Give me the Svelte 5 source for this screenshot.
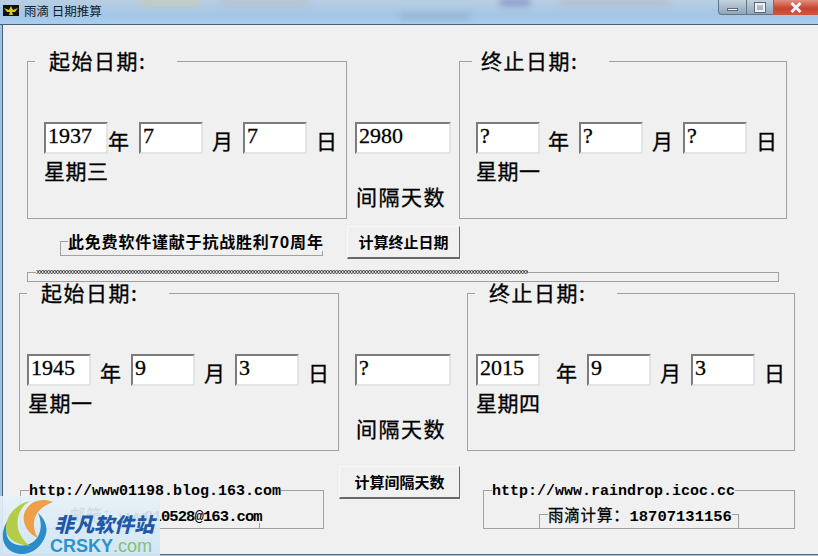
<script>
  // 两组日期框:起始 / 终止
  const blocks = [
    {
      from: { cls: 'g1', title: '起始日期:', y: '1937', m: '7', d: '7', week: '星期三' },
      days: '2980',
      to: { cls: 'g2', title: '终止日期:', y: '?', m: '?', d: '?', week: '星期一' }
    },
    {
      from: { cls: 'g3', title: '起始日期:', y: '1945', m: '9', d: '3', week: '星期一' },
      days: '?',
      to: { cls: 'g4', title: '终止日期:', y: '2015', m: '9', d: '3', week: '星期四' }
    }
  ];
  const crosses = 'x'.repeat(164);
</script>

{#snippet dateGroup(g)}
  <fieldset class="group {g.cls}">
    <legend>{g.title}</legend>
    <div class="dates">
      <input class="field" value={g.y} />
      <span class="unit u1">年</span>
      <input class="field" value={g.m} />
      <span class="unit u2">月</span>
      <input class="field" value={g.d} />
      <span class="unit u3">日</span>
    </div>
    <div class="week">{g.week}</div>
  </fieldset>
{/snippet}

{#snippet block(b)}
  <div class="block {b.from.cls}-row">
    {@render dateGroup(b.from)}
    <div class="middle">
      <input class="field wide" value={b.days} />
      <div class="days-label">间隔天数</div>
    </div>
    {@render dateGroup(b.to)}
  </div>
{/snippet}

<div class="window">
  <header class="titlebar">
    <div class="glass">
      <i class="blob b1"></i><i class="blob b2"></i><i class="blob b3"></i><i class="blob b4"></i><i class="blob b5"></i>
    </div>
    <svg class="app-icon" width="16" height="11" viewBox="0 0 16 11">
      <rect width="16" height="11" fill="#111" />
      <path d="M1 3 L6 5 L8 1 L10 5 L15 3 L12 7 L9 7 L10 10 L6 10 L7 7 L4 7 Z" fill="#d8c820" />
    </svg>
    <span class="title">雨滴 日期推算</span>
    <div class="controls">
      <button class="ctl min" aria-label="最小化"><i></i></button>
      <button class="ctl max" aria-label="最大化"><i></i></button>
      <button class="ctl close" aria-label="关闭">
        <svg width="14" height="11" viewBox="0 0 14 11"><path d="M2.5 1 L11.5 10 M11.5 1 L2.5 10" stroke="#f4f4f4" stroke-width="3" /></svg>
      </button>
    </div>
  </header>

  <main class="form">
    {@render block(blocks[0])}

    <div class="action-row">
      <fieldset class="note"><legend>此免费软件谨献于抗战胜利70周年</legend></fieldset>
      <button class="calc end-btn">计算终止日期</button>
    </div>

    <fieldset class="divider"><legend>{crosses}</legend></fieldset>

    {@render block(blocks[1])}

    <div class="footer">
      <fieldset class="link left">
        <legend>http://www01198.blog.163.com</legend>
        <fieldset class="inner mail"><legend><span class="cjk">邮箱：</span>www010528@163.com</legend></fieldset>
      </fieldset>
      <button class="calc gap-btn">计算间隔天数</button>
      <fieldset class="link right">
        <legend>http://www.raindrop.icoc.cc</legend>
        <fieldset class="inner phone"><legend><span class="cjk">雨滴计算：</span>18707131156</legend></fieldset>
      </fieldset>
    </div>
  </main>

  <!-- 水印 -->
  <div class="watermark">
    <svg class="wm-logo" width="58" height="60" viewBox="0 0 58 60">
      <path d="M14 17 C2 28 -1 44 8 53 C20 63 40 58 46 38 C48 30 44 22 38 17 C43 28 41 40 33 46 C24 52 10 50 7 40 C5 32 8 24 14 17 Z" fill="#2b8cc8" />
      <path d="M30 5 C16 8 5 20 6 34 C7 42 14 48 30 50 C20 42 16 32 18 22 C19 15 24 8 30 5 Z" fill="#b4cc48" />
      <path d="M53 6 C40 1 28 6 24 18 C22 28 28 38 38 42 C33 34 32 24 38 16 C42 11 47 8 53 6 Z" fill="#ee9f48" />
    </svg>
    <div class="wm-cn">非凡软件站</div>
    <div class="wm-en"><b>CRSKY</b><span>.com</span></div>
  </div>
</div>

<style>
  :global(body) {
    margin: 0;
    background: #9fc3e3;
  }

  .window {
    position: relative;
    width: 818px;
    height: 556px;
    overflow: hidden;
    font-family: "Noto Sans CJK SC", "Liberation Mono", monospace;
    color: #000;
  }

  /* 标题栏 */
  .titlebar {
    position: relative;
    height: 25px;
    box-sizing: border-box;
    display: flex;
    align-items: center;
    padding: 0 0 3px 3px;
    border-bottom: 1px solid #4a6076;
    background: linear-gradient(#b8cfe2, #a4c6e6 60%, #a9cdec);
  }

  .glass {
    position: absolute;
    inset: 0;
    overflow: hidden;
    filter: blur(3px);
  }

  .blob {
    position: absolute;
    top: -3px;
    height: 8px;
    background: #c9c9b0;
  }

  .b1 { left: 140px; width: 60px; }
  .b2 { left: 220px; width: 90px; background: #b5c0c8; }
  .b3 { left: 500px; width: 30px; background: #8088c0; }
  .b4 { left: 560px; width: 110px; background: #b4bcc4; }
  .b5 { left: 400px; width: 70px; top: 14px; height: 5px; background: #8fb0cc; }

  .app-icon {
    position: relative;
    flex: none;
  }

  .title {
    position: relative;
    margin-left: 5px;
    font-size: 12.5px;
    line-height: 16px;
    color: #10202c;
  }

  .controls {
    position: absolute;
    top: 0;
    left: 718px;
    display: flex;
    height: 15px;
  }

  .ctl {
    display: flex;
    align-items: center;
    justify-content: center;
    box-sizing: border-box;
    height: 15px;
    padding: 0;
    border: 1px solid #5e7488;
    border-top: 0;
    background: linear-gradient(#c4d2de, #8fa6ba);
  }

  .min {
    width: 29px;
    border-radius: 0 0 0 4px;
  }

  .min i {
    display: block;
    width: 11px;
    height: 3px;
    margin-top: 5px;
    background: #f2f4f6;
    border: 1px solid #5c6a78;
    box-sizing: border-box;
  }

  .max {
    width: 27px;
    border-left: 0;
  }

  .max i {
    display: block;
    width: 10px;
    height: 9px;
    box-sizing: border-box;
    border: 2px solid #eef2f5;
    outline: 1px solid #5c6a78;
  }

  .close {
    width: 44px;
    border: 0;
    background: linear-gradient(#e09080, #c8452e 55%, #c85a40);
  }

  /* 窗体 */
  .form {
    box-sizing: border-box;
    height: 530px;
    margin-left: 2px;
    padding-top: 21px;
    border-left: 1px solid #4a6076;
    border-bottom: 1px solid #56697c;
    background: #f0f0f0;
  }

  fieldset {
    box-sizing: border-box;
    min-width: 0;
    margin: 0;
    padding: 0;
    border: 1px solid #a0a0a0;
  }

  legend {
    padding: 0;
    white-space: nowrap;
  }

  .block {
    display: flex;
    align-items: flex-start;
    height: 173px;
  }

  .group {
    height: 173px;
  }

  .group legend,
  .unit,
  .week,
  .days-label {
    -webkit-text-stroke: 0.3px #000;
  }

  .group legend {
    box-sizing: border-box;
    height: 30px;
    font-size: 21px;
    line-height: 28px;
    letter-spacing: 1.5px;
    margin-left: 7px;
    padding-left: 14px;
  }

  .g1 { width: 320px; margin-left: 24px; }
  .g2 { width: 328px; margin-left: 8px; }
  .g3 { width: 320px; margin-left: 16px; }
  .g4 { width: 328px; margin-left: 16px; }

  .g1 legend { width: 142px; }
  .g2 legend { width: 137px; margin-left: 12px; padding-left: 9px; }
  .g3 legend { width: 142px; }
  .g4 legend { width: 142px; }

  .dates {
    display: flex;
    margin-top: 46px;
    padding-left: 16px;
  }

  .g3 .dates { padding-left: 7px; }
  .g4 .dates { padding-left: 8px; }

  .field {
    box-sizing: border-box;
    flex: none;
    width: 64px;
    height: 32px;
    padding: 0 0 5px 2px;
    border: 2px solid;
    border-color: #7c7c7c #e4e4e4 #e4e4e4 #7c7c7c;
    border-radius: 0;
    outline: 0;
    background: #fff;
    font-family: "Liberation Serif", serif;
    font-size: 22px;
    -webkit-text-stroke: 0.3px #000;
    color: #000;
  }

  .unit {
    flex: none;
    box-sizing: border-box;
    font-size: 21px;
    line-height: 36px;
  }

  /* 年/月/日 的位置每组都不一样 */
  .g1 .u1 { width: 31px; }
  .g1 .u2 { width: 40px; padding-left: 9px; }
  .g2 .u1 { width: 39px; padding-left: 8px; }
  .g2 .u2 { width: 40px; padding-left: 9px; }
  .g3 .u1 { width: 40px; padding-left: 9px; }
  .g3 .u2 { width: 40px; padding-left: 9px; }
  .g4 .u1 { width: 47px; padding-left: 16px; }
  .g4 .u2 { width: 40px; padding-left: 9px; }
  .u3 { padding-left: 9px; }

  .week {
    margin: -3px 0 0 16px;
    font-size: 21px;
    line-height: 30px;
    letter-spacing: 0.5px;
  }

  .g3 .week { margin-left: 8px; }
  .g4 .week { margin-left: 8px; }

  .middle {
    flex: none;
    width: 96px;
    margin-left: 8px;
    padding-top: 76px;
  }

  .g3-row .middle {
    margin-left: 16px;
  }

  .wide {
    display: block;
    width: 96px;
  }

  .days-label {
    margin: 27px 0 0 1px;
    font-size: 21px;
    line-height: 30px;
    letter-spacing: 1.5px;
    white-space: nowrap;
  }

  /* 按钮和说明 */
  .action-row {
    display: flex;
    align-items: flex-start;
    height: 42px;
    padding: 7px 0 0 57px;
  }

  .note {
    width: 263px;
    height: 25px;
    margin-top: 5px;
  }

  .note legend {
    margin-left: 7px;
    font-size: 16px;
    font-weight: 700;
    line-height: 20px;
    letter-spacing: 0.8px;
  }

  .calc {
    box-sizing: border-box;
    flex: none;
    height: 33px;
    padding: 0 0 2px;
    border: 1px solid;
    border-color: #f8f8f8 #696969 #696969 #f8f8f8;
    border-bottom-width: 2px;
    background: #f0f0f0;
    font-family: inherit;
    font-size: 15px;
    font-weight: 700;
    color: #000;
  }

  .end-btn {
    width: 113px;
    margin-left: 24px;
  }

  .divider {
    width: 752px;
    height: 14px;
    margin: 0 0 -4px 24px;
  }

  .divider legend {
    height: 8px;
    margin-left: 8px;
    font-family: "Liberation Mono", monospace;
    font-size: 7px;
    letter-spacing: -1.2px;
    line-height: 8px;
    overflow: hidden;
  }

  .footer {
    display: flex;
    align-items: flex-start;
    padding: 15px 0 0 17px;
  }

  .link {
    position: relative;
    height: 47px;
    margin-top: 16px;
    display: flex;
    justify-content: flex-end;
  }

  .link legend {
    height: 16px;
    margin-left: 8px;
    font-family: "Liberation Mono", monospace;
    font-size: 15px;
    font-weight: 700;
    line-height: 20px;
  }

  .left { width: 304px; }
  .right { width: 312px; margin-left: 23px; }

  .inner {
    position: absolute;
    bottom: -1px;
    height: 24px;
  }

  .inner legend {
    height: 18px;
    font-family: "Liberation Mono", "Noto Sans CJK SC", monospace;
    font-size: 15.5px;
    font-weight: 700;
    line-height: 18px;
  }

  .cjk {
    font-family: "Noto Sans CJK SC", sans-serif;
    font-weight: 400;
    letter-spacing: 0.8px;
    -webkit-text-stroke: 0.3px #000;
  }

  .mail { left: 36px; width: 203px; }
  .mail legend { margin-left: 12px; letter-spacing: -0.9px; }
  .phone { left: 55px; width: 200px; }

  .gap-btn {
    width: 121px;
    margin-left: 15px;
  }

  /* 水印 */
  .watermark {
    position: absolute;
    left: 0;
    top: 496px;
    width: 160px;
    height: 60px;
    background: linear-gradient(#e6f1f8e6, #cfe5f4f2);
  }

  .wm-logo {
    position: absolute;
    left: 0;
    top: 0;
  }

  .wm-cn {
    position: absolute;
    left: 54px;
    top: 15px;
    font-size: 20px;
    font-weight: 900;
    font-style: italic;
    line-height: 26px;
    color: #1e58a8;
    white-space: nowrap;
  }

  .wm-en {
    position: absolute;
    left: 50px;
    top: 40px;
    font-family: "Liberation Sans", sans-serif;
    font-size: 18px;
    line-height: 20px;
    white-space: nowrap;
  }

  .wm-en b { color: #2a94cc; }
  .wm-en span { color: #84c070; }
</style>
